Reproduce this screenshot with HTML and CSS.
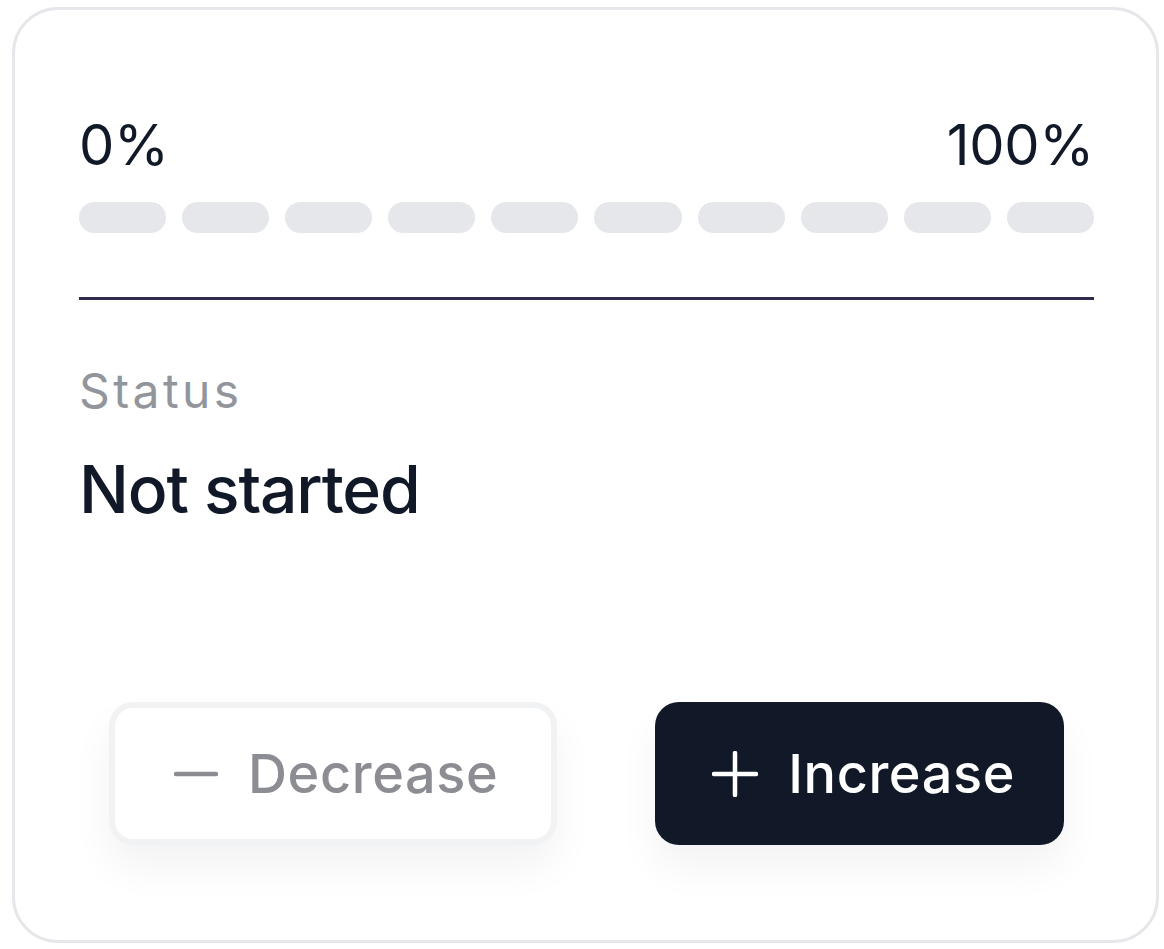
FILE: index.html
```html
<!DOCTYPE html>
<html lang="en">
<head>
<meta charset="utf-8">
<title>Progress</title>
<link rel="stylesheet" href="styles.css">
</head>
<body>
<div class="page">
  <div class="card">
    <div class="scale-labels">
      <span>0%</span>
      <span>100%</span>
    </div>
    <div class="segments">
      <span class="seg"></span><span class="seg"></span><span class="seg"></span><span class="seg"></span><span class="seg"></span>
      <span class="seg"></span><span class="seg"></span><span class="seg"></span><span class="seg"></span><span class="seg"></span>
    </div>
    <div class="divider"></div>
    <div class="status-label">Status</div>
    <div class="status-value">Not started</div>
    <div class="actions">
      <button class="btn btn-secondary" type="button">
        <svg class="icon" width="44" height="44" viewBox="0 0 44 44" aria-hidden="true"><path d="M2 22h40" stroke="currentColor" stroke-width="4.5" stroke-linecap="round" fill="none"/></svg>
        <span>Decrease</span>
      </button>
      <button class="btn btn-primary" type="button">
        <svg class="icon" width="46" height="46" viewBox="0 0 46 46" aria-hidden="true"><path d="M2 23h42M23 2v42" stroke="currentColor" stroke-width="4.5" stroke-linecap="round" fill="none"/></svg>
        <span>Increase</span>
      </button>
    </div>
  </div>
</div>
</body>
</html>
```
FILE: styles.css
```css
* { box-sizing: border-box; }
html, body { margin: 0; padding: 0; background: #ffffff; }
body { font-family: Inter, "Noto Sans", "Liberation Sans", sans-serif; color: #111827; }

.page { padding: 7px 5px 6px 12px; }

.card {
  width: 1147px;
  height: 936px;
  border: 3px solid #e6e7ea;
  border-radius: 46px;
  background: #ffffff;
  padding: 102px 62px 0 64px;
  display: flex;
  flex-direction: column;
}

.scale-labels {
  display: flex;
  justify-content: space-between;
  font-size: 56px;
  line-height: 67px;
  color: #111827;
  letter-spacing: -0.3px;
}

.segments {
  margin-top: 23px;
  display: flex;
  gap: 16px;
}
.seg {
  flex: 1;
  height: 31px;
  border-radius: 16px;
  background: #e5e7eb;
}

.divider {
  margin-top: 64px;
  height: 3px;
  background: #2e2b4c;
}

.status-label {
  margin-top: 62px;
  font-size: 48px;
  line-height: 58px;
  color: #92959b;
  letter-spacing: 3.4px;
}

.status-value {
  margin-top: 30px;
  font-size: 66px;
  line-height: 79px;
  font-weight: 500;
  color: #111827;
  letter-spacing: -1.2px;
}

.actions {
  margin-top: 173px;
  display: flex;
  justify-content: center;
  gap: 98px;
}

.btn {
  height: 143px;
  display: flex;
  align-items: center;
  gap: 30px;
  font-family: inherit;
  font-size: 54px;
  font-weight: 500;
  letter-spacing: 0.6px;
  border-radius: 24px;
  cursor: pointer;
  box-shadow: 0 22px 40px rgba(17, 24, 39, 0.05);
}
.btn-secondary {
  background: #ffffff;
  border: 6px solid #f1f2f4;
  color: #8b8d93;
  padding: 0 53px 0 59px;
}
.btn-primary {
  background: #111827;
  border: 0;
  color: #ffffff;
  padding: 0 49px 0 57px;
}
.icon { flex: none; display: block; }
```
